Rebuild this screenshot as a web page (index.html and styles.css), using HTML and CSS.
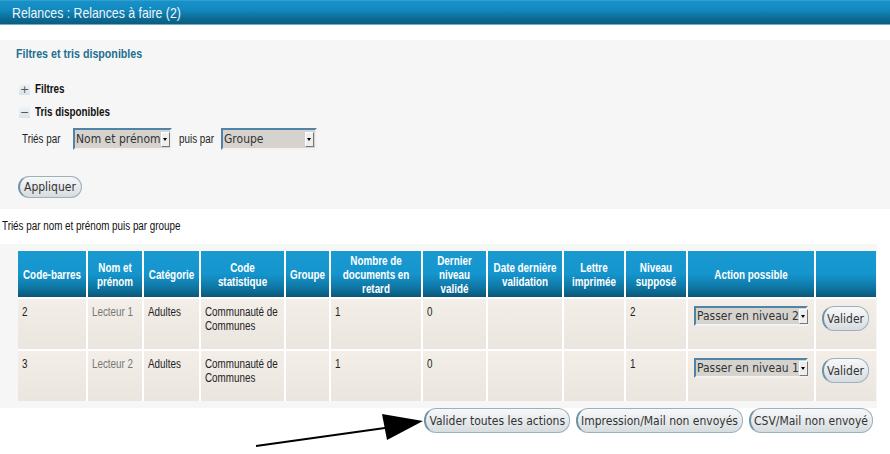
FILE: index.html
```html
<!DOCTYPE html>
<html lang="fr">
<head>
<meta charset="utf-8">
<title>Relances</title>
<link rel="stylesheet" href="styles.css">
</head>
<body>
<div class="titlebar"><span class="nar">Relances : Relances à faire (2)</span></div>

<div class="panel filters">
  <h3 class="ptitle"><span class="nar">Filtres et tris disponibles</span></h3>
  <div class="toggle"><span class="tg">+</span><span class="nar">Filtres</span></div>
  <div class="toggle"><span class="tg">−</span><span class="nar">Tris disponibles</span></div>
  <div class="sortrow">
    <span class="lbl1"><span class="nar">Triés par</span></span>
    <span class="sel sel1"><span class="seltxt">Nom et prénom</span><span class="selarr"></span></span>
    <span class="lbl2"><span class="nar">puis par</span></span>
    <span class="sel sel2"><span class="seltxt">Groupe</span><span class="selarr"></span></span>
  </div>
  <div class="applyrow"><span class="btn">Appliquer</span></div>
</div>

<p class="summary"><span class="nar">Triés par nom et prénom puis par groupe</span></p>

<div class="panel tablepanel">
  <table class="grid">
    <thead>
      <tr>
        <th class="c1"><div class="ci">Code-barres</div></th>
        <th class="c2"><div class="ci">Nom et prénom</div></th>
        <th class="c3"><div class="ci">Catégorie</div></th>
        <th class="c4"><div class="ci">Code statistique</div></th>
        <th class="c5"><div class="ci">Groupe</div></th>
        <th class="c6"><div class="ci">Nombre de documents en retard</div></th>
        <th class="c7"><div class="ci">Dernier niveau validé</div></th>
        <th class="c8"><div class="ci">Date dernière validation</div></th>
        <th class="c9"><div class="ci">Lettre imprimée</div></th>
        <th class="c10"><div class="ci">Niveau supposé</div></th>
        <th class="c11"><div class="ci">Action possible</div></th>
        <th class="c12"></th>
      </tr>
    </thead>
    <tbody>
      <tr>
        <td><div class="ci">2</div></td>
        <td class="name"><div class="ci">Lecteur 1</div></td>
        <td><div class="ci">Adultes</div></td>
        <td><div class="ci">Communauté de Communes</div></td>
        <td></td>
        <td><div class="ci">1</div></td>
        <td><div class="ci">0</div></td>
        <td></td>
        <td></td>
        <td><div class="ci">2</div></td>
        <td><span class="sel rowsel"><span class="seltxt">Passer en niveau 2</span><span class="selarr"></span></span></td>
        <td><span class="btn rowbtn">Valider</span></td>
      </tr>
      <tr>
        <td><div class="ci">3</div></td>
        <td class="name"><div class="ci">Lecteur 2</div></td>
        <td><div class="ci">Adultes</div></td>
        <td><div class="ci">Communauté de Communes</div></td>
        <td></td>
        <td><div class="ci">1</div></td>
        <td><div class="ci">0</div></td>
        <td></td>
        <td></td>
        <td><div class="ci">1</div></td>
        <td><span class="sel rowsel"><span class="seltxt">Passer en niveau 1</span><span class="selarr"></span></span></td>
        <td><span class="btn rowbtn">Valider</span></td>
      </tr>
    </tbody>
  </table>
</div>

<div class="actions">
  <span class="btn">Valider toutes les actions</span>
  <span class="btn">Impression/Mail non envoyés</span>
  <span class="btn">CSV/Mail non envoyé</span>
</div>

<svg class="pointer" width="890" height="454" viewBox="0 0 890 454" aria-hidden="true">
  <line x1="256" y1="446" x2="392" y2="427" stroke="#000" stroke-width="2"/>
  <polygon points="382,414 387,440 423,421" fill="#000"/>
</svg>
</body>
</html>
```

FILE: styles.css
```css
html, body {
  margin: 0;
  padding: 0;
  background: #fff;
}
body {
  width: 890px;
  height: 454px;
  overflow: hidden;
  position: relative;
  font-family: "Liberation Sans", Arial, sans-serif;
  font-size: 12px;
  color: #222;
}

/* Arial-Narrow-like rendering: Liberation Sans compressed to 82% width */
.nar {
  display: inline-block;
  white-space: nowrap;
  transform: scaleX(0.82);
  transform-origin: 0 50%;
}
.ci {
  width: 121.95%;
  transform: scaleX(0.82);
  transform-origin: 0 0;
}

.titlebar {
  height: 24px;
  line-height: 25px;
  padding-left: 12px;
  font-size: 15px;
  color: #eef6fb;
  background: linear-gradient(#4aaed8 0, #1791c8 1px, #128ac0 40%, #0c6991 80%, #0b5d82 100%);
  border-bottom: 1px solid #74aac6;
  margin-bottom: 15px;
}

.panel {
  background: #f6f6f6;
}

.filters {
  padding: 6px 0 11px 0;
}
.ptitle {
  margin: 0 0 16px 16px;
  font-size: 13px;
  line-height: 16px;
  font-weight: bold;
  color: #20708f;
}
.toggle {
  height: 23px;
  line-height: 23px;
  padding-left: 19px;
  font-weight: bold;
  color: #111;
  display: flex;
  align-items: center;
}
.tg {
  width: 11px;
  height: 11px;
  margin-right: 5px;
  background: linear-gradient(#eef3f7, #d9e3ea);
  color: #555;
  font-family: "DejaVu Sans", sans-serif;
  font-weight: normal;
  font-size: 11px;
  line-height: 11px;
  text-align: center;
}

.sortrow {
  margin-top: 4px;
  height: 22px;
  display: flex;
  align-items: center;
  padding-left: 22px;
  white-space: nowrap;
}
.lbl1 { width: 51px; flex: none; }
.lbl2 { width: 42px; margin-left: 7px; flex: none; }

.sel {
  display: inline-flex;
  align-items: center;
  box-sizing: border-box;
  height: 22px;
  border: 2px solid;
  border-color: #4d84a8 #f2f2f2 #f2f2f2 #4d84a8;
  background: #d6d3ce;
  padding: 0 1px 0 1px;
  font-family: "DejaVu Sans Condensed", "DejaVu Sans", sans-serif;
  font-stretch: condensed;
  font-size: 12px;
  color: #333;
  white-space: nowrap;
  flex: none;
}
.seltxt { flex: none; }
.selarr {
  margin-left: auto;
  flex: none;
  width: 9px;
  height: 15px;
  box-sizing: border-box;
  border: 1px solid;
  border-color: #fff #777 #777 #fff;
  background: #eeeeec;
  position: relative;
}
.selarr::after {
  content: "";
  position: absolute;
  left: 1px;
  top: 5px;
  border-left: 2.5px solid transparent;
  border-right: 2.5px solid transparent;
  border-top: 3px solid #000;
}
.sel1 { width: 99px; }
.sel2 { width: 96px; }

.applyrow {
  margin-top: 26px;
  padding-left: 18px;
  height: 22px;
}

.btn {
  display: inline-flex;
  align-items: center;
  box-sizing: border-box;
  height: 23px;
  padding: 0 4px 0 3px;
  border: 1px solid #9db0bc;
  border-left: 2px solid #6f93a8;
  border-radius: 11px;
  background: linear-gradient(#f7f8f8, #e4e8ea 60%, #d6dcdf);
  font-family: "DejaVu Sans Condensed", "DejaVu Sans", sans-serif;
  font-stretch: condensed;
  font-size: 12px;
  color: #333;
  white-space: nowrap;
}
.applyrow .btn { height: 22px; padding: 0 5px 0 4px; }

.summary {
  margin: 0;
  padding: 10px 0 10px 2px;
  line-height: 15px;
  font-size: 12px;
  color: #111;
}

.tablepanel {
  width: 877px;
  box-sizing: border-box;
  padding: 7px 0 7px 18px;
}

.grid {
  border-collapse: separate;
  border-spacing: 0;
  table-layout: fixed;
  width: 858px;
}
.grid th, .grid td {
  box-sizing: border-box;
  border-right: 2px solid #fff;
  border-bottom: 2px solid #fff;
  padding: 0 4px;
}
.grid th:last-child, .grid td:last-child { border-right: 0; }
.grid tbody tr:last-child td { border-bottom: 0; }

.grid th {
  height: 48px;
  line-height: 14px;
  padding: 1px 4px 0 4px;
  color: #fff;
  font-weight: bold;
  font-size: 12px;
  text-align: center;
  vertical-align: middle;
  background: linear-gradient(#1b9ad2 0, #1595cd 50%, #0f78a6 78%, #0a5878 100%);
}
.grid td {
  height: 52px;
  line-height: 14px;
  padding-top: 6px;
  vertical-align: top;
  background: linear-gradient(#f3eee8, #ebe5df);
  color: #222;
}
.grid tbody tr:last-child td { height: 50px; }
.grid td.name { color: #777; }

.c1 { width: 70px; }
.c2 { width: 56px; }
.c3 { width: 57px; }
.c4 { width: 85px; }
.c5 { width: 45px; }
.c6 { width: 92px; }
.c7 { width: 65px; }
.c8 { width: 76px; }
.c9 { width: 62px; }
.c10 { width: 62px; }
.c11 { width: 128px; }
.c12 { width: 60px; }

.rowsel {
  width: 114px;
  height: 20px;
  margin: 1px 0 0 2px;
}
.rowbtn {
  height: 25px;
  margin: 1px 0 0 2px;
  padding: 0 4px 0 3px;
  border-radius: 12px;
}

.actions {
  display: flex;
  justify-content: flex-end;
  gap: 6px;
  padding-right: 17px;
  margin-top: 0;
}
.actions .btn { height: 25px; border-radius: 12px; }

.pointer {
  position: absolute;
  left: 0;
  top: 0;
  pointer-events: none;
}
```
